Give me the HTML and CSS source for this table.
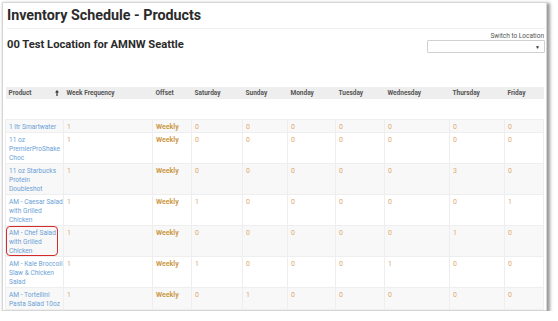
FILE: index.html
```html
<!DOCTYPE html>
<html>
<head>
<meta charset="utf-8">
<link rel="stylesheet" href="styles.css">
</head>
<body>
<div class="frame">
  <h1 class="title">Inventory Schedule - Products</h1>
  <div class="loc-row">
    <h2 class="subtitle">00 Test Location for AMNW Seattle</h2>
    <div class="switch">
      <div class="switch-label">Switch to Location</div>
      <div class="select"><span class="caret">&#9660;</span></div>
    </div>
  </div>
  <table class="grid">
    <colgroup>
      <col style="width:58px"><col style="width:89px"><col style="width:39px"><col style="width:51px"><col style="width:45px"><col style="width:48px"><col style="width:49px"><col style="width:65px"><col style="width:55px"><col style="width:39px">
    </colgroup>
    <thead>
      <tr class="head">
        <th><div class="sort">Product<svg class="arrow" width="4" height="6" viewBox="0 0 4 6"><path d="M2 0 L4 2.4 L2.6 2.4 L2.6 6 L1.4 6 L1.4 2.4 L0 2.4 Z" fill="#333"/></svg></div></th>
        <th>Week Frequency</th>
        <th class="c-off">Offset</th>
        <th>Saturday</th>
        <th>Sunday</th>
        <th>Monday</th>
        <th>Tuesday</th>
        <th>Wednesday</th>
        <th>Thursday</th>
        <th>Friday</th>
      </tr>
      <tr class="spacer"><td colspan="10"></td></tr>
    </thead>
    <tbody>
      <tr class="odd"><td class="prod">1 ltr Smartwater</td><td class="num">1</td><td class="wk">Weekly</td><td class="num">0</td><td class="num">0</td><td class="num">0</td><td class="num">0</td><td class="num">0</td><td class="num">0</td><td class="num">0</td></tr>
      <tr><td class="prod">11 oz<br>PremierProShake<br>Choc</td><td class="num">1</td><td class="wk">Weekly</td><td class="num">0</td><td class="num">0</td><td class="num">0</td><td class="num">0</td><td class="num">0</td><td class="num">0</td><td class="num">0</td></tr>
      <tr class="odd"><td class="prod">11 oz Starbucks<br>Protein<br>Doubleshot</td><td class="num">1</td><td class="wk">Weekly</td><td class="num">0</td><td class="num">0</td><td class="num">0</td><td class="num">0</td><td class="num">0</td><td class="num">3</td><td class="num">0</td></tr>
      <tr><td class="prod">AM - Caesar Salad<br>with Grilled<br>Chicken</td><td class="num">1</td><td class="wk">Weekly</td><td class="num">1</td><td class="num">0</td><td class="num">0</td><td class="num">0</td><td class="num">0</td><td class="num">0</td><td class="num">1</td></tr>
      <tr class="odd"><td class="prod hl">AM - Chef Salad<br>with Grilled<br>Chicken<span class="ring"></span></td><td class="num">1</td><td class="wk">Weekly</td><td class="num">0</td><td class="num">0</td><td class="num">0</td><td class="num">0</td><td class="num">0</td><td class="num">1</td><td class="num">0</td></tr>
      <tr><td class="prod">AM - Kale Broccoli<br>Slaw &amp; Chicken<br>Salad</td><td class="num">1</td><td class="wk">Weekly</td><td class="num">1</td><td class="num">0</td><td class="num">0</td><td class="num">0</td><td class="num">1</td><td class="num">0</td><td class="num">0</td></tr>
      <tr class="odd"><td class="prod">AM - Tortellini<br>Pasta Salad 10oz</td><td class="num">1</td><td class="wk">Weekly</td><td class="num">0</td><td class="num">1</td><td class="num">0</td><td class="num">0</td><td class="num">0</td><td class="num">0</td><td class="num">0</td></tr>
    </tbody>
  </table>
</div>
</body>
</html>
```

FILE: styles.css
```css
html, body {
  margin: 0;
  padding: 0;
  background: #ffffff;
}
body {
  font-family: Roboto, "Liberation Sans", sans-serif;
  color: #333;
}
.frame {
  box-sizing: border-box;
  margin: 2px 0 0 2px;
  width: 545px;
  height: 309px;
  border: 1px solid #d6d6d6;
  background: #fff;
  box-shadow: 2px 2px 3px 1px rgba(0, 0, 0, 0.4);
  overflow: hidden;
  padding: 3px 1px 0 2px;
}
.title {
  margin: 0 0 0 2px;
  font-size: 14.3px;
  line-height: 18px;
  font-weight: 700;
  color: #2b2b2b;
  padding-bottom: 4px;
  border-bottom: 1px solid #eeeeee;
}
.loc-row {
  display: flex;
  justify-content: space-between;
  align-items: flex-start;
}
.subtitle {
  margin: 9px 0 0 2px;
  font-size: 11.2px;
  line-height: 13px;
  font-weight: 700;
  color: #2b2b2b;
}
.switch {
  display: flex;
  flex-direction: column;
  align-items: flex-end;
  padding-top: 3px;
}
.switch-label {
  font-size: 6.5px;
  line-height: 8px;
  color: #555;
  padding-right: 1px;
}
.select {
  box-sizing: border-box;
  width: 118px;
  height: 13px;
  border: 1px solid #d0d0d0;
  border-radius: 1px;
  display: flex;
  justify-content: flex-end;
  align-items: center;
  padding-right: 4px;
}
.caret {
  font-size: 5px;
  color: #333;
}
.grid {
  margin: 34px 0 0 0;
  width: 538px;
  table-layout: fixed;
  border-collapse: collapse;
  font-size: 7px;
}
.head th {
  height: 12px;
  padding: 0 3px;
  background: #eeeeee;
  color: #555;
  font-size: 6.5px;
  font-weight: 700;
  text-align: left;
  vertical-align: middle;
  white-space: nowrap;
}
.sort {
  display: flex;
  justify-content: space-between;
  align-items: center;
  padding-right: 2px;
}
.spacer td {
  height: 20px;
  padding: 0;
}
tbody td {
  padding: 3px 3px 0;
  line-height: 9px;
  vertical-align: top;
  border: 1px solid #eeeeee;
  color: #dea96a;
}
tbody tr.odd td {
  background: #f8f8f8;
}
td.prod {
  color: #6c9fd6;
  font-size: 6.6px;
  white-space: nowrap;
}
td.wk {
  color: #cc9a48;
  font-weight: 700;
}
td.hl {
  position: relative;
}
.ring {
  position: absolute;
  left: 0;
  top: 0;
  width: 52px;
  height: 30px;
  box-sizing: border-box;
  border: 1.5px solid #d42a2a;
  border-radius: 4px;
}
```
